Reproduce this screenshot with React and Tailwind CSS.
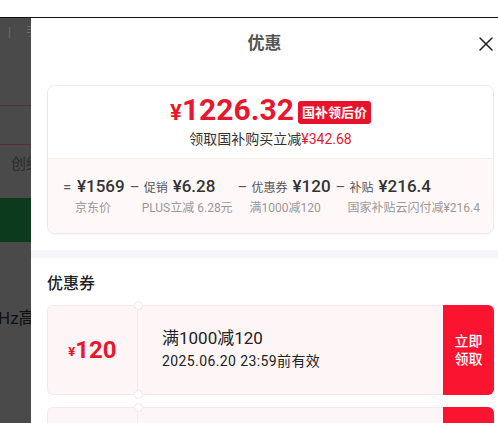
import { X } from "lucide-react";

const font = "font-['Roboto','Noto_Sans_CJK_SC',sans-serif]";

function Breakdown({ op, label, value, note }) {
  return (
    <div className="flex flex-col">
      <div className="flex items-baseline h-[24px] text-[#333]">
        <span className="w-[14px] text-[15px] text-[#555]">{op}</span>
        {label && <span className="text-[12px] text-[#555] mr-[5px]">{label}</span>}
        <span className="text-[17px] font-medium leading-[24px]">{value}</span>
      </div>
      <div className="ml-[12px] mt-[1px] text-[12px] leading-[18px] text-[#999] whitespace-nowrap">{note}</div>
    </div>
  );
}

function Coupon({ amount, title, expire }) {
  return (
    <div className="flex h-[90px] mb-[12px]">
      <div className="relative flex flex-1 bg-[#fdf5f6] border border-[#f6e8ea] border-r-0 rounded-l-[6px]">
        <div className="w-[90px] shrink-0 flex items-center justify-center text-[#e8172d] font-bold border-r border-[#f6e8ea]">
          <span className="text-[13px] mt-[4px]">¥</span>
          <span className="text-[24px] leading-none">{amount}</span>
        </div>
        <span className="absolute left-[86px] -top-[5px] w-[9px] h-[9px] rounded-full bg-white border border-[#f3e6e8]" />
        <span className="absolute left-[86px] -bottom-[5px] w-[9px] h-[9px] rounded-full bg-white border border-[#f3e6e8]" />
        <div className="flex flex-col justify-center pl-[24px] text-[#222]">
          <div className="text-[17px] leading-[23px]">{title}</div>
          <div className="text-[14px] leading-[23px] tracking-[0.4px]">{expire}</div>
        </div>
      </div>
      <button className="w-[51px] shrink-0 bg-[#fa1430] rounded-r-[6px] text-white text-[14px] leading-[18px] font-medium flex flex-col items-center justify-center">
        <span>立即</span>
        <span>领取</span>
      </button>
    </div>
  );
}

export default function App() {
  return (
    <div className={`w-[498px] h-[423px] overflow-hidden bg-white ${font}`}>
      <div className="h-[18px] bg-white border-b border-[#111]" />
      <div className="flex h-[405px]">
        {/* dimmed page behind the sheet */}
        <div className="w-[31px] shrink-0 bg-[#4a4a4a] overflow-hidden">
          <div className="h-[88px] border-b border-[#5f2a30] pt-[5px] flex items-start gap-[15px] pl-[8px] text-[12px] text-[#6a6a6a] whitespace-nowrap">
            <span>|</span>
            <span>手</span>
          </div>
          <div className="h-[39px] border-b border-[#5f2a30]" />
          <div className="h-[53px] pl-[11px] pt-[8px] text-[15px] text-[#2c2c2c] whitespace-nowrap">创维</div>
          <div className="h-[44px] bg-[#0b3a1c]" />
          <div className="pt-[64px] -ml-[2px] text-[17px] text-[#111] whitespace-nowrap">Hz高</div>
        </div>

        {/* bottom sheet */}
        <div className="flex-1 bg-white overflow-hidden">
          <div className="relative h-[50px] flex items-center justify-center">
            <span className="text-[17px] font-bold text-[#555] pt-[1px]">优惠</span>
            <X className="absolute right-0 top-[14px] text-[#222]" size={24} strokeWidth={1.5} />
          </div>

          <div className="mt-[17px] ml-[16px] mr-[4px] h-[149px] rounded-[8px] border border-[#efe7e8] overflow-hidden shadow-[0_1px_3px_rgba(0,0,0,0.04)]">
            <div className="h-[72px] bg-white flex flex-col items-center pt-[10px]">
              <div className="flex items-center h-[32px] gap-[4px]">
                <div className="flex items-baseline text-[#e8172d] font-bold">
                  <span className="text-[22px]">¥</span>
                  <span className="text-[30px] leading-none">1226.32</span>
                </div>
                <span className="bg-[#e8132b] text-white text-[13px] font-bold leading-[23px] px-[4px] rounded-[3px]">国补领后价</span>
              </div>
              <div className="text-[14px] leading-[20px] text-[#333] mt-[1px]">
                领取国补购买立减<span className="text-[#e8172d]">¥342.68</span>
              </div>
            </div>
            <div className="h-[76px] bg-[#fff8f8] border-t border-[#f7eded] flex justify-between pl-[15px] pr-[13px] pt-[15px]">
              <Breakdown op="=" value="¥1569" note="京东价" />
              <Breakdown op="–" label="促销" value="¥6.28" note="PLUS立减 6.28元" />
              <Breakdown op="–" label="优惠券" value="¥120" note="满1000减120" />
              <Breakdown op="–" label="补贴" value="¥216.4" note="国家补贴云闪付减¥216.4" />
            </div>
          </div>

          <div className="mt-[16px] h-[8px] bg-[#f5f6fa]" />

          <div className="pl-[16px] pr-[4px] pt-[16px]">
            <div className="text-[16px] font-medium text-[#222] leading-[20px] mb-[11px]">优惠券</div>
            <Coupon amount="120" title="满1000减120" expire="2025.06.20 23:59前有效" />
            <Coupon amount="50" title="满500减50" expire="2025.06.20 23:59前有效" />
          </div>
        </div>
      </div>
    </div>
  );
}
